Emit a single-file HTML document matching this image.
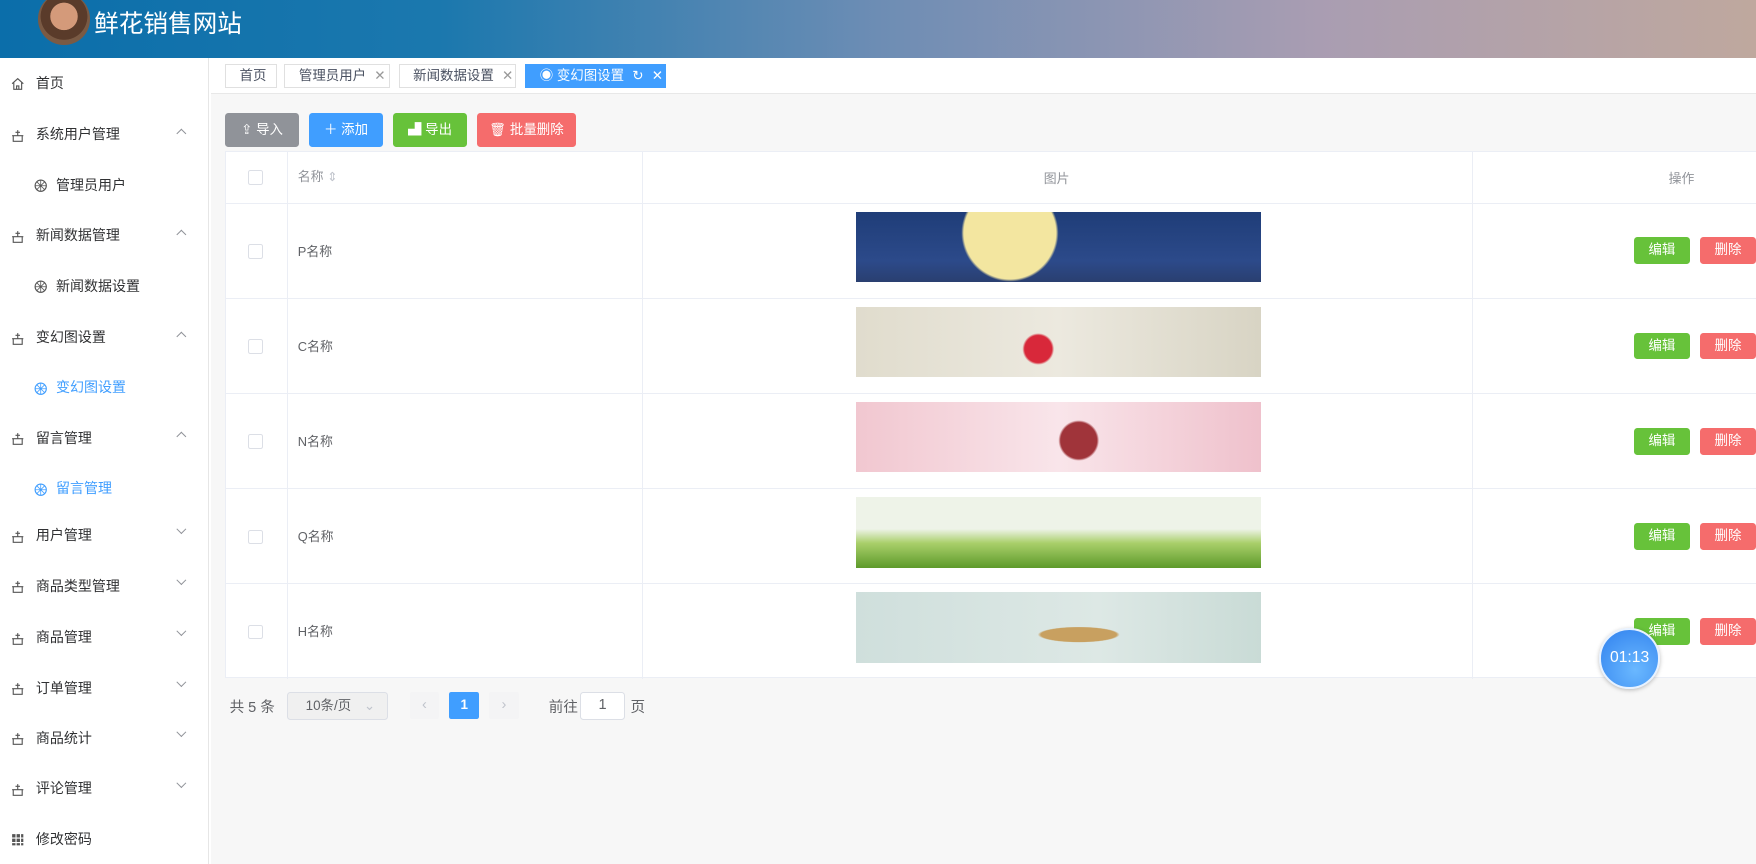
<!DOCTYPE html>
<html><head><meta charset="utf-8">
<style>
html{zoom:1.12}
*{box-sizing:border-box;margin:0;padding:0}
body{width:1568px;height:771px;overflow:hidden;font-family:"Liberation Sans","Noto Sans CJK SC",sans-serif;background:#fff;position:relative;color:#606266}
.hd{position:absolute;left:0;top:0;width:1568px;height:52px;background:linear-gradient(90deg,#0b6eaa 0%,#1b78ae 25%,#6d8db4 50%,#a99db2 75%,#bfa89e 100%)}
.av{position:absolute;left:34px;top:-6px;width:46px;height:46px;border-radius:50%;background:radial-gradient(circle at 50% 45%,#d49a7a 0 35%,#5a3b2a 36% 60%,#7a5a44 61%)}
.tt{position:absolute;left:84px;top:4px;color:#fff;font-size:22px}
.sb{position:absolute;left:0;top:52px;width:187px;height:719px;background:#fff;border-right:1px solid #e6e6e6}
.mi{position:absolute;left:0;width:187px;height:20px;font-size:12.5px;color:#303133;line-height:18px}
.mi .ic{position:absolute;left:10px;top:4px;width:12px;height:12px}
.mi .tx{position:absolute;left:32px}
.mi.sub .ic{left:30px}.mi.sub .tx{left:50px}
.mi.act{color:#409eff}
.mi .ar{position:absolute;left:159px;top:5px;width:6px;height:6px;border-left:1px solid #909399;border-top:1px solid #909399;transform:rotate(45deg)}
.mi .ar.dn{transform:rotate(225deg);top:1px}
.main{position:absolute;left:188px;top:52px;width:1380px;height:719px;background:#f7f7f7}
.tabs{position:absolute;left:0;top:0;width:1380px;height:32px;background:#fff;border-bottom:1px solid #e8e8e8}
.tab{position:absolute;top:5px;height:22px;border:1px solid #e0e0e0;font-size:12px;line-height:20px;color:#495060;padding-left:12px}
.btn{position:absolute;top:49px;height:30px;border-radius:3px;color:#fff;font-size:12px;line-height:30px;text-align:center}
.tbl{position:absolute;left:13px;top:83px;width:1367px;height:470px;background:#fff;border:1px solid #ebeef5;border-right:none}
.row{position:absolute;left:0;width:1367px;border-bottom:1px solid #ebeef5}
.vl{position:absolute;top:0;height:470px;width:1px;background:#ebeef5}
.cb{position:absolute;left:20px;width:13px;height:13px;border:1px solid #dcdfe6;border-radius:2px;background:#fff}
.nm{position:absolute;left:64px;font-size:11.5px;color:#606266}
.img{position:absolute;left:562px;width:362px;height:63px}
.eb,.db{position:absolute;width:50px;height:24px;border-radius:3px;color:#fff;font-size:12px;line-height:24px;text-align:center}
.eb{left:1257px;background:#67c23a}.db{left:1316px;background:#f56c6c}
.pg{position:absolute;top:566px;font-size:13px;color:#606266}
</style></head><body>
<div class="hd"><div class="av"></div><div class="tt">鲜花销售网站</div></div>
<div class="sb">
<div class="mi" style="top:13px"><svg class="ic" viewBox="0 0 12 12"><path d="M1 6L6 1.5 11 6M2.5 5v6h7V5M5 11V8h2v3" fill="none" stroke="#555" stroke-width="1"/></svg><span class="tx">首页</span></div>
<div class="mi" style="top:59px"><svg class="ic" viewBox="0 0 12 12"><path d="M1 6h10M2 6v5h8V6M6 1v5M4 3h4" fill="none" stroke="#555"/></svg><span class="tx">系统用户管理</span><i class="ar"></i></div>
<div class="mi sub" style="top:104px"><svg class="ic" viewBox="0 0 12 12"><circle cx="6" cy="6" r="5" fill="none" stroke="#555"/><path d="M1 6h10M6 1v10M2.5 2.5l7 7M9.5 2.5l-7 7" stroke="#555" stroke-width=".7"/></svg><span class="tx">管理员用户</span></div>
<div class="mi" style="top:149px"><svg class="ic" viewBox="0 0 12 12"><path d="M1 6h10M2 6v5h8V6M6 1v5M4 3h4" fill="none" stroke="#555"/></svg><span class="tx">新闻数据管理</span><i class="ar"></i></div>
<div class="mi sub" style="top:194px"><svg class="ic" viewBox="0 0 12 12"><circle cx="6" cy="6" r="5" fill="none" stroke="#555"/><path d="M1 6h10M6 1v10M2.5 2.5l7 7M9.5 2.5l-7 7" stroke="#555" stroke-width=".7"/></svg><span class="tx">新闻数据设置</span></div>
<div class="mi" style="top:240px"><svg class="ic" viewBox="0 0 12 12"><path d="M1 6h10M2 6v5h8V6M6 1v5M4 3h4" fill="none" stroke="#555"/></svg><span class="tx">变幻图设置</span><i class="ar"></i></div>
<div class="mi sub act" style="top:285px"><svg class="ic" viewBox="0 0 12 12"><circle cx="6" cy="6" r="5" fill="none" stroke="#409eff"/><path d="M1 6h10M6 1v10M2.5 2.5l7 7M9.5 2.5l-7 7" stroke="#409eff" stroke-width=".7"/></svg><span class="tx">变幻图设置</span></div>
<div class="mi" style="top:330px"><svg class="ic" viewBox="0 0 12 12"><path d="M1 6h10M2 6v5h8V6M6 1v5M4 3h4" fill="none" stroke="#555"/></svg><span class="tx">留言管理</span><i class="ar"></i></div>
<div class="mi sub act" style="top:375px"><svg class="ic" viewBox="0 0 12 12"><circle cx="6" cy="6" r="5" fill="none" stroke="#409eff"/><path d="M1 6h10M6 1v10M2.5 2.5l7 7M9.5 2.5l-7 7" stroke="#409eff" stroke-width=".7"/></svg><span class="tx">留言管理</span></div>
<div class="mi" style="top:417px"><svg class="ic" viewBox="0 0 12 12"><path d="M1 6h10M2 6v5h8V6M6 1v5M4 3h4" fill="none" stroke="#555"/></svg><span class="tx">用户管理</span><i class="ar dn"></i></div>
<div class="mi" style="top:462px"><svg class="ic" viewBox="0 0 12 12"><path d="M1 6h10M2 6v5h8V6M6 1v5M4 3h4" fill="none" stroke="#555"/></svg><span class="tx">商品类型管理</span><i class="ar dn"></i></div>
<div class="mi" style="top:508px"><svg class="ic" viewBox="0 0 12 12"><path d="M1 6h10M2 6v5h8V6M6 1v5M4 3h4" fill="none" stroke="#555"/></svg><span class="tx">商品管理</span><i class="ar dn"></i></div>
<div class="mi" style="top:553px"><svg class="ic" viewBox="0 0 12 12"><path d="M1 6h10M2 6v5h8V6M6 1v5M4 3h4" fill="none" stroke="#555"/></svg><span class="tx">订单管理</span><i class="ar dn"></i></div>
<div class="mi" style="top:598px"><svg class="ic" viewBox="0 0 12 12"><path d="M1 6h10M2 6v5h8V6M6 1v5M4 3h4" fill="none" stroke="#555"/></svg><span class="tx">商品统计</span><i class="ar dn"></i></div>
<div class="mi" style="top:643px"><svg class="ic" viewBox="0 0 12 12"><path d="M1 6h10M2 6v5h8V6M6 1v5M4 3h4" fill="none" stroke="#555"/></svg><span class="tx">评论管理</span><i class="ar dn"></i></div>
<div class="mi" style="top:688px"><svg class="ic" viewBox="0 0 12 12"><path d="M1 1h3v3H1zM5 1h3v3H5zM9 1h2v3H9zM1 5h3v3H1zM5 5h3v3H5zM9 5h2v3H9zM1 9h3v2H1zM5 9h3v2H5zM9 9h2v2H9z" fill="#555"/></svg><span class="tx">修改密码</span></div>
</div>
<div class="main">
<div class="tabs">
<div class="tab" style="left:13px;width:46px">首页</div>
<div class="tab" style="left:66px;width:94px">管理员用户 <span style="margin-left:4px;color:#999">✕</span></div>
<div class="tab" style="left:168px;width:105px">新闻数据设置 <span style="margin-left:4px;color:#999">✕</span></div>
<div class="tab" style="left:281px;width:126px;background:#409eff;border-color:#409eff;color:#fff">◉ 变幻图设置 <span style="margin-left:4px">↻</span> <span style="margin-left:4px">✕</span></div>
</div>
<div class="btn" style="left:13px;width:66px;background:#909399">⇪ 导入</div>
<div class="btn" style="left:88px;width:66px;background:#409eff">＋ 添加</div>
<div class="btn" style="left:163px;width:66px;background:#67c23a">▟ 导出</div>
<div class="btn" style="left:238px;width:88px;background:#f56c6c">🗑 批量删除</div>
<div class="tbl">
<div class="vl" style="left:54px"></div><div class="vl" style="left:371px"></div><div class="vl" style="left:1112px"></div>
<div class="row" style="top:0;height:46px"><div class="cb" style="top:16px"></div><div class="nm" style="top:12px;color:#909399">名称 <span style="font-size:11px;color:#c0c4cc">⇕</span></div><div style="position:absolute;left:730px;top:14px;font-size:11.5px;color:#909399">图片</div><div style="position:absolute;left:1288px;top:14px;font-size:11.5px;color:#909399">操作</div></div>
<div class="row" style="top:46px;height:85px"><div class="cb" style="top:36px"></div><div class="nm" style="top:33px">P名称</div>
<div class="img" style="top:7px;background:radial-gradient(circle at 38% 30%,#f3e6a0 0 18%,transparent 19%),linear-gradient(180deg,#1f3d78,#2c4a8a 70%,#2a3f70)"></div>
<div class="eb" style="top:30px">编辑</div><div class="db" style="top:30px">删除</div></div>
<div class="row" style="top:131px;height:85px"><div class="cb" style="top:36px"></div><div class="nm" style="top:33px">C名称</div>
<div class="img" style="top:7px;background:radial-gradient(circle at 45% 60%,#d8283a 0 6%,transparent 7%),linear-gradient(90deg,#e0dccd,#ece9df 50%,#d8d4c4)"></div>
<div class="eb" style="top:30px">编辑</div><div class="db" style="top:30px">删除</div></div>
<div class="row" style="top:216px;height:85px"><div class="cb" style="top:36px"></div><div class="nm" style="top:33px">N名称</div>
<div class="img" style="top:7px;background:radial-gradient(circle at 55% 55%,#a0343a 0 8%,transparent 9%),linear-gradient(90deg,#f1c7d0,#f9e5ea 50%,#efc1cc)"></div>
<div class="eb" style="top:30px">编辑</div><div class="db" style="top:30px">删除</div></div>
<div class="row" style="top:301px;height:85px"><div class="cb" style="top:36px"></div><div class="nm" style="top:33px">Q名称</div>
<div class="img" style="top:7px;background:linear-gradient(180deg,#eef3e8 0 45%,#a9cf6a 65%,#5d9a2a)"></div>
<div class="eb" style="top:30px">编辑</div><div class="db" style="top:30px">删除</div></div>
<div class="row" style="top:386px;height:85px;border-bottom:none"><div class="cb" style="top:36px"></div><div class="nm" style="top:33px">H名称</div>
<div class="img" style="top:7px;background:radial-gradient(ellipse at 55% 60%,#c8a060 0 12%,transparent 13%),linear-gradient(90deg,#cfdfdc,#dde8e5 60%,#c9dbd6)"></div>
<div class="eb" style="top:30px">编辑</div><div class="db" style="top:30px">删除</div></div>
</div>
<div class="pg" style="left:17px;top:569px">共 5 条</div>
<div class="pg" style="left:68px;width:90px;height:25px;border:1px solid #dcdfe6;border-radius:3px;background:#f0f0f0;font-size:12px;line-height:23px;padding-left:16px">10条/页 <span style="color:#c0c4cc;margin-left:8px">⌄</span></div>
<div class="pg" style="left:178px;width:26px;height:24px;background:#f4f4f5;border-radius:2px;text-align:center;line-height:24px;color:#c0c4cc">‹</div>
<div class="pg" style="left:213px;width:27px;height:24px;background:#409eff;border-radius:2px;text-align:center;line-height:24px;color:#fff;font-weight:bold;font-size:12px">1</div>
<div class="pg" style="left:249px;width:26px;height:24px;background:#f4f4f5;border-radius:2px;text-align:center;line-height:24px;color:#c0c4cc">›</div>
<div class="pg" style="left:302px;top:569px">前往</div>
<div class="pg" style="left:330px;width:40px;height:25px;border:1px solid #dcdfe6;border-radius:3px;background:#fff;text-align:center;line-height:23px;color:#606266">1</div>
<div class="pg" style="left:375px;top:569px">页</div>
</div>
<div style="position:absolute;left:1428px;top:561px;width:54px;height:54px;border-radius:50%;background:radial-gradient(circle at 60% 70%,#6ab8ff,#2f80ee);border:2px solid #e8f2ff;box-shadow:0 1px 4px rgba(0,0,0,.25);color:#fff;font-size:14px;text-align:center;line-height:50px">01:13</div>
</body></html>
